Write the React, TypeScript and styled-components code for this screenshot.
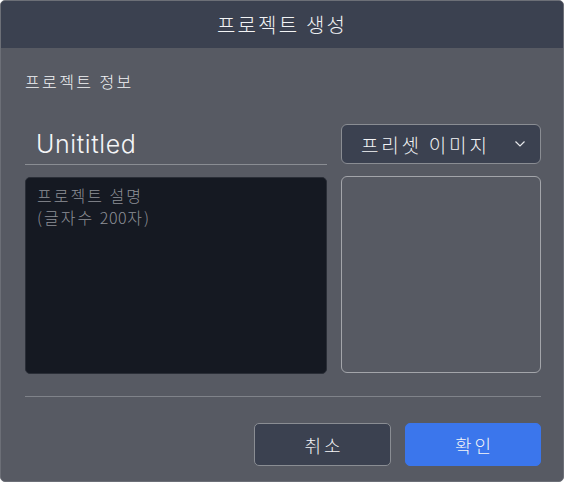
import React from "react";
import styled, { createGlobalStyle } from "styled-components";

const Global = createGlobalStyle`
  html, body { margin: 0; padding: 0; background: #ffffff; }
  body { font-family: "Inter", "Noto Sans CJK KR", sans-serif; }
  * { box-sizing: border-box; }
`;

const Modal = styled.div`
  width: 564px;
  height: 482px;
  background: #575a63;
  border: 1px solid #6c6f77;
  border-radius: 5px;
  overflow: hidden;
  display: flex;
  flex-direction: column;
`;

const Header = styled.div`
  height: 47px;
  background: #3b4150;
  color: #f2f3f5;
  font-family: "Noto Sans CJK KR", sans-serif;
  font-weight: 300;
  font-size: 20px;
  display: flex;
  align-items: center;
  justify-content: center;
  letter-spacing: 2.2px;
`;

const Body = styled.div`
  flex: 1;
  padding: 21px 22px 0 24px;
  display: flex;
  flex-direction: column;
`;

const SectionTitle = styled.div`
  font-family: "Noto Sans CJK KR", sans-serif;
  font-weight: 300;
  font-size: 16px;
  color: #f2f3f5;
  line-height: 24px;
  letter-spacing: 2.4px;
`;

const Columns = styled.div`
  margin-top: 31px;
  display: grid;
  grid-template-columns: 302px 200px;
  column-gap: 14px;
`;

const Column = styled.div`
  display: flex;
  flex-direction: column;
  gap: 12px;
`;

const TitleInput = styled.div`
  height: 41px;
  border-bottom: 1px solid #8a8d93;
  padding: 0 0 0 11px;
  display: flex;
  align-items: center;
  font-family: "Inter", sans-serif;
  font-weight: 300;
  font-size: 25px;
  color: #f4f5f7;
  letter-spacing: 0.6px;
`;

const TextArea = styled.div`
  height: 197px;
  background: #151922;
  border: 1px solid #2a2e37;
  border-radius: 5px;
  padding: 6px 11px;
  font-family: "Noto Sans CJK KR", sans-serif;
  font-weight: 300;
  font-size: 16px;
  line-height: 22px;
  color: #8d9097;
  letter-spacing: 2px;
`;

const Digits = styled.span`
  letter-spacing: 0.6px;
`;

const Select = styled.div`
  height: 40px;
  background: #3b4150;
  border: 1px solid #8a8d93;
  border-radius: 6px;
  display: flex;
  align-items: center;
  padding: 0 14px 0 19px;
  justify-content: space-between;
  font-family: "Noto Sans CJK KR", sans-serif;
  font-weight: 300;
  font-size: 19px;
  color: #f2f3f5;
  letter-spacing: 2.8px;
`;

const ImageBox = styled.div`
  height: 197px;
  border: 1px solid #a3a5aa;
  border-radius: 6px;
`;

const Divider = styled.div`
  margin-top: 22px;
  height: 1px;
  background: #80838a;
`;

const Footer = styled.div`
  margin-top: 26px;
  display: flex;
  justify-content: flex-end;
  gap: 14px;
`;

const Button = styled.div<{ $primary?: boolean }>`
  width: ${(p) => (p.$primary ? "136px" : "137px")};
  height: 43px;
  border-radius: 5px;
  display: flex;
  align-items: center;
  justify-content: center;
  font-family: "Noto Sans CJK KR", sans-serif;
  font-weight: 300;
  font-size: 18px;
  color: #f4f5f7;
  letter-spacing: 3px;
  padding-left: 3px;
  background: ${(p) => (p.$primary ? "#3b76ec" : "#3b4150")};
  border: 1px solid ${(p) => (p.$primary ? "#3b76ec" : "#8a8d93")};
`;

const Chevron = () => (
  <svg width="12" height="8" viewBox="0 0 12 8" fill="none">
    <path d="M1.5 1.5 L6 6 L10.5 1.5" stroke="#e6e7ea" strokeWidth="1.2" />
  </svg>
);

export default function App() {
  return (
    <>
      <Global />
      <Modal>
        <Header>프로젝트 생성</Header>
        <Body>
          <SectionTitle>프로젝트 정보</SectionTitle>
          <Columns>
            <Column>
              <TitleInput>Unititled</TitleInput>
              <TextArea>
                프로젝트 설명
                <br />
                (글자수 <Digits>200</Digits>자)
              </TextArea>
            </Column>
            <Column>
              <Select>
                <span>프리셋 이미지</span>
                <Chevron />
              </Select>
              <ImageBox />
            </Column>
          </Columns>
          <Divider />
          <Footer>
            <Button>취소</Button>
            <Button $primary>확인</Button>
          </Footer>
        </Body>
      </Modal>
    </>
  );
}
